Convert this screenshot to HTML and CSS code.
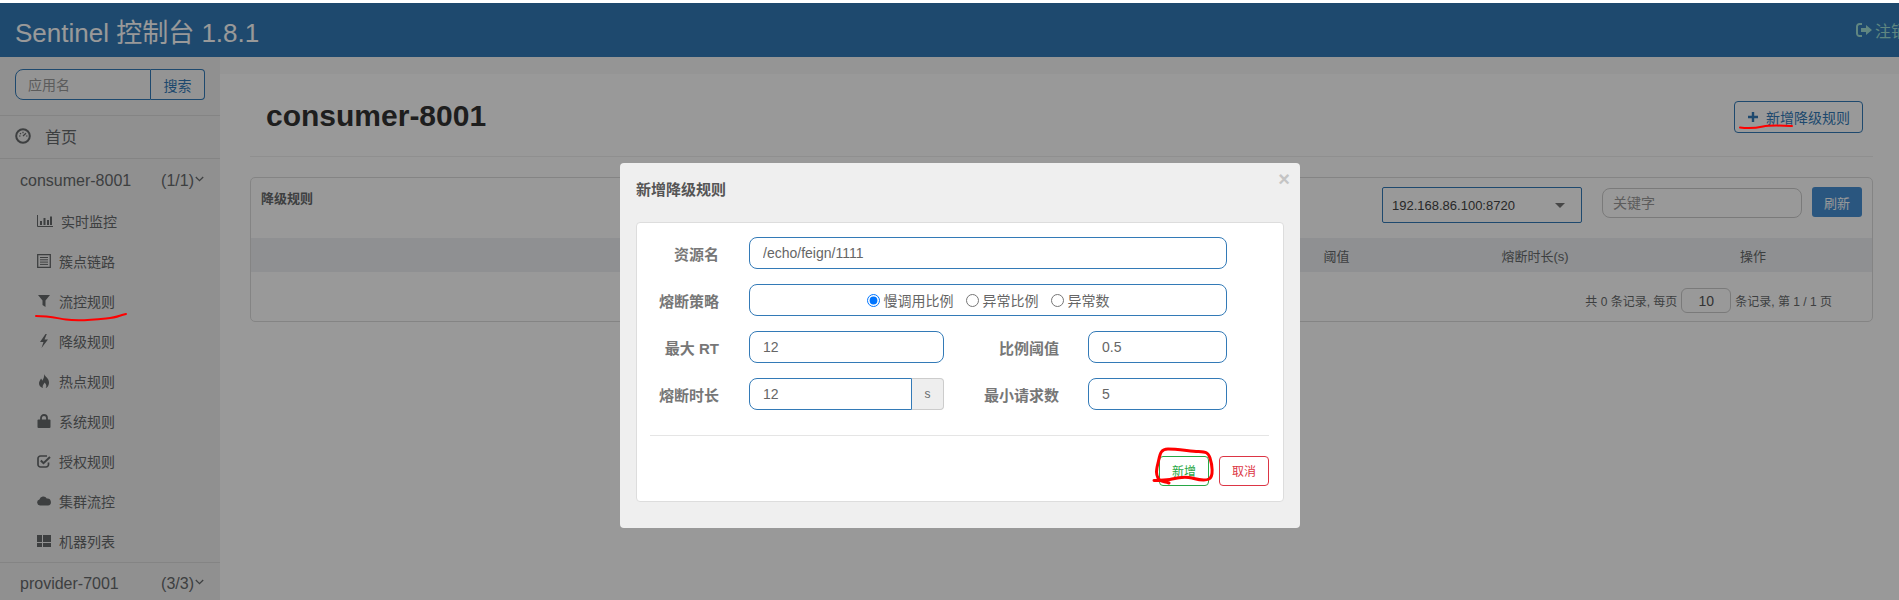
FILE: index.html
```html
<!DOCTYPE html>
<html lang="zh">
<head>
  <meta charset="UTF-8">
  <title>Sentinel 控制台 1.8.1</title>
  <link rel="stylesheet" href="styles.css">
</head>
<body>
  <header class="topbar">
    <span class="brand">Sentinel 控制台 1.8.1</span>
    <a class="logout">
      <svg width="16" height="14" viewBox="0 0 16 14"><path d="M6 1H3.500A2.500 2.500 0 0 0 1 3.500v7A2.500 2.500 0 0 0 3.500 13H6" fill="none" stroke="currentColor" stroke-width="2"/><path d="M5 5h5V2l6 5-6 5V9H5z" fill="currentColor"/></svg>
      注销
    </a>
  </header>

  <div class="layout">
    <aside class="sidebar">
      <div class="search">
        <input class="search-input" placeholder="应用名">
        <button class="search-btn">搜索</button>
      </div>

      <a class="home">
        <svg class="home-icon" width="16" height="16" viewBox="0 0 16 16"><circle cx="8" cy="8" r="6.800" fill="none" stroke="currentColor" stroke-width="2"/><path d="M4 8h1.500M8 3.800v1.500M11 8h1.500M5 5.200l1 1M11 5.200L8 8" stroke="currentColor" stroke-width="1.200"/></svg>
        首页
      </a>

      <div class="app-row">
        <span class="app-name">consumer-8001</span>
        <span class="app-count">(1/1)</span>
        <svg class="chevron" width="9" height="6" viewBox="0 0 9 6"><path d="M.8 1l3.700 3.600L8.200 1" fill="none" stroke="currentColor" stroke-width="1.300"/></svg>
      </div>

      <nav class="subnav">
        <a class="subnav-item">
          <svg width="16" height="12" viewBox="0 0 16 12"><path d="M.5 0v11.500H16" fill="none" stroke="currentColor"/><path d="M3 6h2v4H3zM6.500 3h2v7h-2zM10 5h2v5h-2zM13 1.500h2V10h-2z" fill="currentColor"/></svg>
          实时监控
        </a>
        <a class="subnav-item">
          <svg width="14" height="14" viewBox="0 0 14 14"><path d="M.7.7h12.600v12.600H.7z" fill="none" stroke="currentColor" stroke-width="1.300"/><path d="M3 3.500h8M3 5.800h8M3 8.100h8M3 10.400h8" stroke="currentColor"/></svg>
          簇点链路
        </a>
        <a class="subnav-item">
          <svg width="14" height="14" viewBox="0 0 14 14"><path d="M1 1h12L8.500 6.500V13l-3-2V6.500z" fill="currentColor"/></svg>
          流控规则
        </a>
        <a class="subnav-item">
          <svg width="14" height="14" viewBox="0 0 14 14"><path d="M8.500 0L3 8h3.500L4.500 14 11 5.500H7.500L9.800 0z" fill="currentColor"/></svg>
          降级规则
        </a>
        <a class="subnav-item">
          <svg width="14" height="14" viewBox="0 0 14 14"><path d="M7 0c1 2.500 4.800 4.300 5 8.200C12.100 11.500 10 14 8.700 14c1-1.500 1-3.500-1.200-5.500C7 10.500 5 11 6 14 3.500 13.500 1.800 11.500 2 9c.2-2 1.500-3 2-4.500.8.500 1 1.500 1.200 2.200C6.500 5 7.500 2.500 7 0z" fill="currentColor"/></svg>
          热点规则
        </a>
        <a class="subnav-item">
          <svg width="14" height="14" viewBox="0 0 14 14"><path d="M4 6V4a3 3 0 0 1 6 0v2" fill="none" stroke="currentColor" stroke-width="1.800"/><rect x=".5" y="5.500" width="13" height="8.500" rx="1" fill="currentColor"/></svg>
          系统规则
        </a>
        <a class="subnav-item">
          <svg width="14" height="14" viewBox="0 0 14 14"><path d="M11.500 8.500v2A2.500 2.500 0 0 1 9 13H3.500A2.500 2.500 0 0 1 1 10.500v-6A2.500 2.500 0 0 1 3.500 2H10" fill="none" stroke="currentColor" stroke-width="1.700"/><path d="M3.800 6.500l2.700 2.700L13 3" fill="none" stroke="currentColor" stroke-width="2"/></svg>
          授权规则
        </a>
        <a class="subnav-item">
          <svg width="14" height="10" viewBox="0 0 14 10"><path d="M3 9.500a3 3 0 0 1-.6-5.900A4 4 0 0 1 9.800 2.600 3.500 3.500 0 1 1 11 9.500z" fill="currentColor"/></svg>
          集群流控
        </a>
        <a class="subnav-item">
          <svg width="14" height="14" viewBox="0 0 14 14"><path d="M0 1h5v7H0zM6 1h8v7H6zM0 9h5v4H0zM6 9h8v4H6z" fill="currentColor"/></svg>
          机器列表
        </a>
      </nav>

      <div class="app-row app-row-next">
        <span class="app-name">provider-7001</span>
        <span class="app-count">(3/3)</span>
        <svg class="chevron" width="9" height="6" viewBox="0 0 9 6"><path d="M.8 1l3.700 3.600L8.200 1" fill="none" stroke="currentColor" stroke-width="1.300"/></svg>
      </div>
    </aside>

    <main class="main">
      <div class="page">
        <div class="page-head">
          <h1 class="page-title">consumer-8001</h1>
          <button class="add-btn">
            <svg width="10" height="10" viewBox="0 0 10 10"><path d="M3.800 0h2.400v3.800H10v2.400H6.200V10H3.800V6.200H0V3.800h3.800z" fill="currentColor"/></svg>
            新增降级规则
          </button>
        </div>

        <section class="panel">
          <div class="panel-bar">
            <span class="panel-title">降级规则</span>
            <div class="machine">
              <span>192.168.86.100:8720</span>
              <i class="machine-arrow"></i>
            </div>
            <input class="keyword" placeholder="关键字">
            <button class="refresh">刷新</button>
          </div>
          <div class="table-head">
            <span></span>
            <span>阈值</span>
            <span>熔断时长(s)</span>
            <span>操作</span>
          </div>
          <div class="pager">
            <span>共 0 条记录, 每页</span>
            <input class="page-size" value="10">
            <span>条记录, 第 1 / 1 页</span>
          </div>
        </section>
      </div>
    </main>
  </div>

  <div class="overlay">
    <div class="dialog">
      <span class="dialog-close">×</span>
      <h3 class="dialog-title">新增降级规则</h3>
      <div class="card">
        <div class="form-row">
          <label class="form-label">资源名</label>
          <input class="field field-wide" value="/echo/feign/1111">
        </div>
        <div class="form-row">
          <label class="form-label">熔断策略</label>
          <div class="field field-wide radios">
            <label class="radio"><input type="radio" name="grade" checked>慢调用比例</label>
            <label class="radio"><input type="radio" name="grade">异常比例</label>
            <label class="radio"><input type="radio" name="grade">异常数</label>
          </div>
        </div>
        <div class="form-row">
          <label class="form-label">最大 RT</label>
          <input class="field field-half" value="12">
          <label class="form-label form-label-right">比例阈值</label>
          <input class="field field-small" value="0.5">
        </div>
        <div class="form-row">
          <label class="form-label">熔断时长</label>
          <div class="input-group">
            <input class="field field-addon" value="12">
            <span class="addon">s</span>
          </div>
          <label class="form-label form-label-right">最小请求数</label>
          <input class="field field-small" value="5">
        </div>
        <div class="card-line"></div>
        <div class="card-actions">
          <button class="btn-outline btn-green">新增</button>
          <button class="btn-outline btn-red">取消</button>
        </div>
      </div>
    </div>
  </div>

  <!-- hand-drawn red marks on top of the screenshot -->
  <svg class="marks" width="1899" height="600" viewBox="0 0 1899 600">
    <g fill="none" stroke="#f00" stroke-linecap="round" stroke-linejoin="round">
      <path d="M36 316C48 316 56 318 66 319.500S92 320 106 318.500 118 315.500 126 314" stroke-width="2"/>
      <path d="M1740 127.500C1748 128.500 1756 128 1763 126.500S1780 125.500 1792 126" stroke-width="2"/>
      <path d="M1154 480.500C1160 480 1166 480.500 1172 479S1186 476.500 1192 478 1204 481.500 1209 479 1212 464 1210 458 1206 452 1198 451.500 1176 449 1168 449 1160 455 1158 463 1156 474 1158 478 1164 481 1169 483" stroke-width="3"/>
    </g>
  </svg>
</body>
</html>
```

FILE: styles.css
```css
html, body {
  margin: 0;
  height: 600px;
  overflow: hidden;
}

body {
  position: relative;
  padding-top: 3px;
  box-sizing: border-box;
  background: #fff;
  font-family: "Liberation Sans", "Noto Sans CJK SC", sans-serif;
  font-size: 14px;
  color: #676a6c;
}

input, button {
  font-family: inherit;
  box-sizing: border-box;
}

input::placeholder {
  color: #999;
}

/* top bar */
.topbar {
  display: flex;
  align-items: center;
  justify-content: space-between;
  height: 54px;
  background: #337ab7;
  color: #fff;
  overflow: hidden;
}

.brand {
  margin-left: 15px;
  font-size: 26px;
}

.logout {
  display: flex;
  align-items: center;
  flex-shrink: 0;
  gap: 3px;
  margin-right: -8px;
  font-size: 16px;
  color: #a0e0d8;
}

/* page frame */
.layout {
  display: flex;
  height: 543px;
}

.sidebar {
  flex: 0 0 220px;
  background: #f0f0f0;
}

.search {
  display: flex;
  height: 59px;
  padding: 12px 15px 0;
  box-sizing: border-box;
  border-bottom: 1px solid #ddd;
}

.search-input {
  width: 136px;
  height: 31px;
  padding: 0 12px;
  background: #f7f7f7;
  border: 1px solid #337ab7;
  border-radius: 8px 0 0 8px;
  font-size: 14px;
}

.search-btn {
  width: 54px;
  height: 31px;
  padding: 0;
  background: #f7f7f7;
  border: 1px solid #337ab7;
  border-left: 0;
  border-radius: 0 4px 4px 0;
  font-size: 14px;
  color: #337ab7;
}

.home {
  display: flex;
  align-items: center;
  gap: 14px;
  height: 43px;
  padding: 0 0 2px 15px;
  box-sizing: border-box;
  border-bottom: 1px solid #ddd;
  font-size: 16px;
}

.app-row {
  display: flex;
  align-items: center;
  height: 43px;
  padding: 0 16px 0 20px;
  font-size: 16px;
}

.app-row-next {
  height: 41px;
  border-top: 1px solid #ddd;
}

.app-count {
  margin-left: auto;
}

.chevron {
  margin: 0 0 3px 1px;
}

.subnav-item {
  display: flex;
  align-items: center;
  gap: 8px;
  height: 40px;
  padding: 0 0 2px 37px;
  box-sizing: border-box;
  font-size: 14px;
}

/* main content */
.main {
  flex: 1;
  padding-top: 17px;
  background: #f8f8f8;
}

.page {
  height: 100%;
  padding: 0 26px 0 30px;
  background: #fff;
}

.page-head {
  display: flex;
  align-items: center;
  justify-content: space-between;
  height: 82px;
  padding: 0 10px 0 16px;
  border-bottom: 1px solid #eee;
}

.page-title {
  margin: 2px 0 0;
  font-size: 30px;
  font-weight: bold;
  color: #333;
}

.add-btn {
  display: flex;
  align-items: center;
  gap: 8px;
  width: 129px;
  height: 32px;
  margin-top: 3px;
  padding: 0 0 0 13px;
  background: #fff;
  border: 1px solid #337ab7;
  border-radius: 4px;
  font-size: 14px;
  color: #337ab7;
}

.panel {
  height: 145px;
  margin-top: 20px;
  box-sizing: border-box;
  border: 1px solid #ddd;
  border-radius: 5px;
}

.panel-bar {
  display: flex;
  align-items: flex-start;
  height: 60px;
  padding: 9px 10px 0;
  box-sizing: border-box;
}

.panel-title {
  margin-right: auto;
  padding-top: 1px;
  font-size: 13px;
  font-weight: bold;
}

.machine {
  display: flex;
  align-items: center;
  justify-content: space-between;
  width: 200px;
  height: 36px;
  padding: 0 16px 0 9px;
  box-sizing: border-box;
  border: 1px solid #337ab7;
  border-radius: 2px;
  font-size: 13px;
  color: #444;
}

.machine-arrow {
  border-top: 5px solid #777;
  border-left: 5px solid transparent;
  border-right: 5px solid transparent;
}

.keyword {
  width: 200px;
  height: 30px;
  margin: 1px 10px 0 20px;
  padding: 0 10px;
  border: 1px solid #ccc;
  border-radius: 8px;
  font-size: 14px;
}

.refresh {
  width: 50px;
  height: 30px;
  padding: 0;
  background: #4790d4;
  border: 0;
  border-radius: 3px;
  font-size: 13px;
  color: #fff;
}

.table-head {
  display: grid;
  grid-template-columns: 986px 199px 198px 1fr;
  align-items: center;
  height: 34px;
  background: #eef1f3;
  font-size: 13px;
  text-align: center;
}

.pager {
  display: flex;
  align-items: center;
  justify-content: flex-end;
  gap: 4px;
  padding: 16px 40px 0 0;
  font-size: 12px;
}

.page-size {
  width: 50px;
  height: 25px;
  padding: 0;
  border: 1px solid #ccc;
  border-radius: 6px;
  font-size: 14px;
  text-align: center;
  color: #555;
}

/* dialog */
.overlay {
  position: absolute;
  top: 3px;
  left: 0;
  right: 0;
  bottom: 0;
  padding: 160px 0 0 620px;
  background: rgba(0, 0, 0, .4);
}

.dialog {
  position: relative;
  width: 680px;
  height: 365px;
  padding: 0 16px;
  box-sizing: border-box;
  background: #efefef;
  border-radius: 4px;
}

.dialog-title {
  height: 59px;
  margin: 0;
  line-height: 54px;
  font-size: 15px;
  font-weight: bold;
  color: #555;
}

.dialog-close {
  position: absolute;
  top: 4px;
  right: 10px;
  font-size: 20px;
  font-weight: bold;
  line-height: 24px;
  color: #c4c4c4;
}

.card {
  height: 280px;
  box-sizing: border-box;
  padding-top: 14px;
  background: #fff;
  border: 1px solid #ddd;
  border-radius: 4px;
}

.form-row {
  display: flex;
  align-items: center;
  height: 32px;
  margin-bottom: 15px;
}

.form-label {
  flex: 0 0 82px;
  margin-right: 30px;
  font-size: 15px;
  font-weight: bold;
  text-align: right;
  color: #777;
}

.form-label-right {
  flex: 0 0 115px;
  margin-right: 29px;
}

.field {
  height: 32px;
  padding: 0 13px;
  box-sizing: border-box;
  background: #fff;
  border: 1px solid #337ab7;
  border-radius: 8px;
  font-size: 14px;
  color: #666;
}

.field-wide {
  width: 478px;
}

.field-half {
  width: 195px;
}

.field-small {
  width: 139px;
}

.radios {
  display: flex;
  justify-content: center;
  align-items: center;
  gap: 12px;
}

.radio {
  display: flex;
  align-items: center;
  gap: 4px;
}

.radio input {
  margin: 0;
}

.input-group {
  display: flex;
  width: 195px;
}

.field-addon {
  width: 163px;
  border-radius: 8px 0 0 8px;
}

.addon {
  display: flex;
  align-items: center;
  justify-content: center;
  flex: 1;
  background: #eee;
  border: 1px solid #ccc;
  border-left: 0;
  border-radius: 0 4px 4px 0;
  font-size: 12px;
}

.card-line {
  height: 1px;
  margin: 25px 14px 0 13px;
  background: #e5e5e5;
}

.card-actions {
  display: flex;
  justify-content: flex-end;
  gap: 10px;
  margin: 20px 14px 0 0;
}

.btn-outline {
  width: 50px;
  height: 30px;
  padding: 0 0 2px;
  background: #fff;
  border: 1px solid;
  border-radius: 4px;
  font-size: 12px;
}

.btn-green {
  color: #28a745;
}

.btn-red {
  color: #dc3545;
}

.marks {
  position: absolute;
  top: 0;
  left: 0;
  pointer-events: none;
}
```
